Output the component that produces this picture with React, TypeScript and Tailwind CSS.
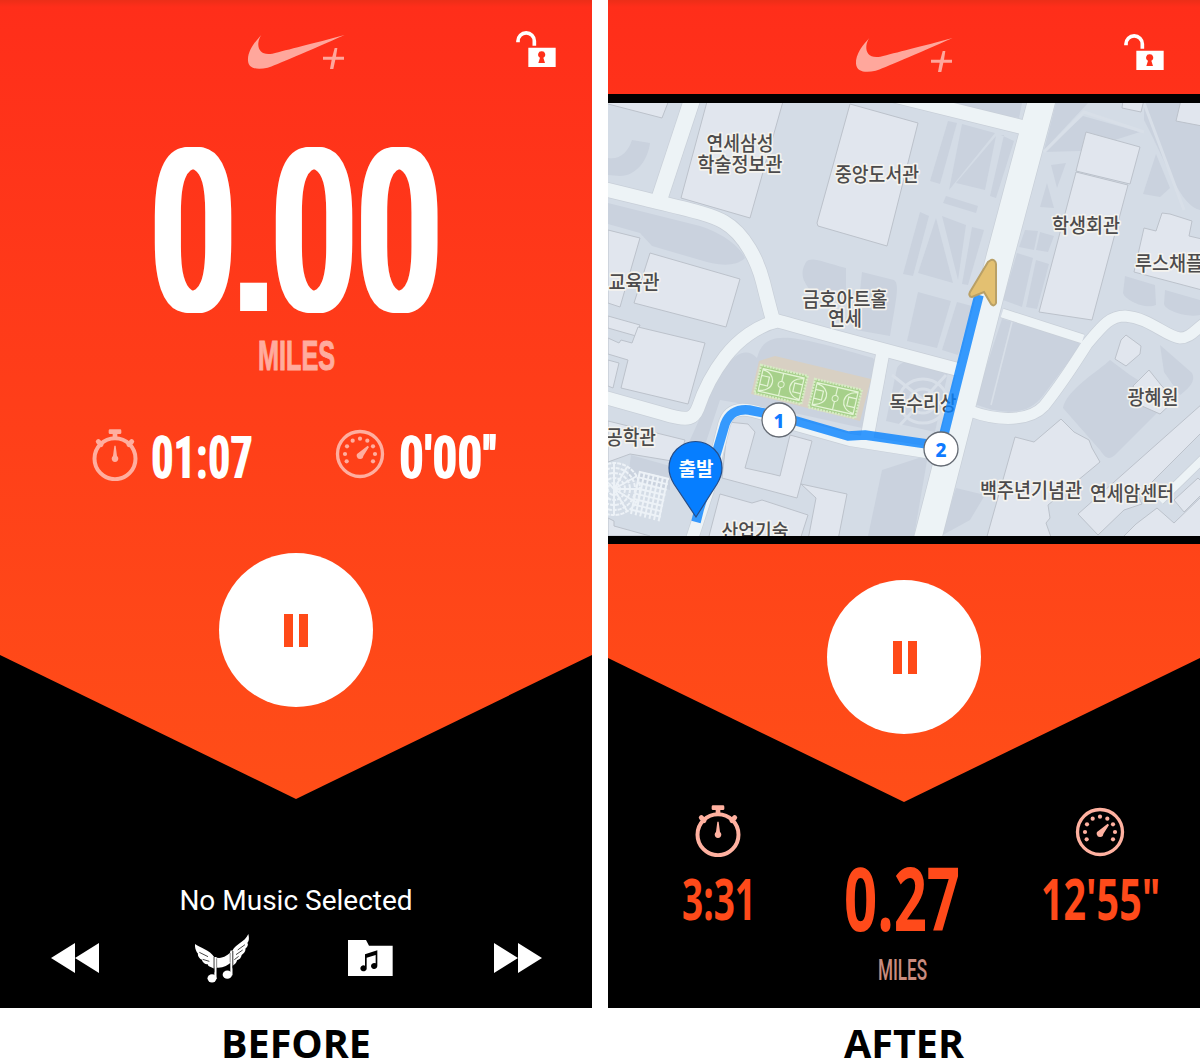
import { useLayoutEffect, useRef, type ReactNode } from "react";

/** Text squeezed horizontally so that it spans exactly `width` pixels. */
function Condensed({ children, width, className }: { children: string; width: number; className: string }) {
  const ref = useRef<HTMLSpanElement>(null);
  useLayoutEffect(() => {
    const el = ref.current;
    if (el) el.style.transform = `scaleX(${width / el.offsetWidth})`;
  }, [width, children]);
  return (
    <span className="block" style={{ width }}>
      <span ref={ref} className={`inline-block origin-left whitespace-nowrap ${className}`}>
        {children}
      </span>
    </span>
  );
}

// Sideways shadows thicken the vertical strokes only, as a condensed display face has them.
const hugeDigits =
  "font-['Roboto'] text-[227px] leading-[200px] font-medium tracking-[5px] [text-shadow:-7px_0_#fff,-4.5px_0_#fff,-2px_0_#fff,2px_0_#fff,4.5px_0_#fff,7px_0_#fff]";
const statDigits =
  "font-['Roboto'] text-[60px] leading-[57px] font-bold tracking-[3px] text-white [text-shadow:-1.6px_0_#fff,1.6px_0_#fff]";

function Header({ className }: { className: string }) {
  return (
    <header className={`relative flex justify-between pl-[247px] pr-[36px] ${className}`}>
      <svg className="h-[36px] w-[98px]" viewBox="50 42 294 108" fill="#ffa79c">
        <path d="M93 45C74 65 51 94 53 122C55 147 82 150 112 143C132 138 240 90 343 45C250 70 170 90 126 101C96 107 82 91 84 69C85 59 89 51 93 45Z" />
        <path d="M313 84H321L317 110H341V119H315L309 147H299L304 119H278V110H306Z" />
      </svg>
      <svg className="-mt-[3px] h-[36px] w-[41px]" viewBox="855 32 123 108">
        <path d="M864 66V62A24.5 24.5 0 0 1 913 62V76" fill="none" stroke="#fff" strokeWidth="11" />
        <path
          fill="#fff"
          fillRule="evenodd"
          d="M895 82H977V140H895ZM935 93A10 10 0 0 0 930 112L925 128H945L940 112A10 10 0 0 0 935 93Z"
        />
      </svg>
    </header>
  );
}

function Stopwatch({ className }: { className: string }) {
  return (
    <svg className={`h-[52px] w-[46px] ${className}`} viewBox="35 43 138 156" fill="currentColor">
      <circle cx="104" cy="132" r="61.5" fill="none" stroke="currentColor" strokeWidth="12" />
      <rect x="85" y="44" width="38" height="14" rx="4" />
      <rect x="97" y="56" width="14" height="14" />
      <path d="M54 81L62 90M154 81L146 90" stroke="currentColor" strokeWidth="15" strokeLinecap="round" />
      <path d="M102 93H106L110 124A10 10 0 1 1 98 124Z" />
    </svg>
  );
}

const gaugeDots = [
  [800, 143], [795, 121], [801, 98], [818, 81], [840, 75], [862, 81], [879, 98], [885, 121], [879, 143],
];

function Gauge({ className }: { className: string }) {
  return (
    <svg className={`h-[50px] w-[50px] ${className}`} viewBox="765 46 150 150" fill="currentColor">
      <circle cx="840" cy="121" r="67.5" fill="none" stroke="currentColor" strokeWidth="10" />
      {gaugeDots.map(([x, y]) => (
        <circle key={`${x}-${y}`} cx={x} cy={y} r="6.3" />
      ))}
      <path d="M863 96L867 100L850 127A10 10 0 1 1 836 117Z" />
    </svg>
  );
}

function PauseButton({ className }: { className: string }) {
  return (
    <button aria-label="Pause" className={`relative flex size-[154px] items-center justify-center gap-[6px] rounded-full bg-white ${className}`}>
      <span className="h-[33px] w-[9px] bg-[#ff4a18]" />
      <span className="h-[33px] w-[9px] bg-[#ff4a18]" />
    </button>
  );
}

function WingedNotes() {
  return (
    <svg className="h-[49px] w-[54px]" viewBox="15 25 162 147" fill="#fff">
      <path d="M15 55C28 66 60 72 73 95V129L62 124C56 122 52 119 54 116C44 116 36 108 36 102C28 100 22 90 24 84C17 76 14 64 15 55Z" />
      <path d="M127 75C138 54 164 50 175 25C178 38 177 46 172 52C176 56 172 64 166 69C168 76 162 84 155 88C154 96 148 102 141 104C140 112 134 117 127 121Z" />
      <path d="M73 94C92 102 112 93 126 74V106C112 123 94 129 73 125Z" />
      <rect x="73" y="94" width="6.5" height="66" />
      <rect x="121" y="75" width="6.5" height="74" />
      <ellipse cx="66" cy="158" rx="13.5" ry="12.5" />
      <ellipse cx="112" cy="147" rx="14" ry="12.5" />
      <path
        d="M28 80L54 93M38 101L58 107M165 57L143 73M158 73L138 87M146 92L133 102M72 94V140M128.5 76V128"
        fill="none"
        stroke="#000"
        strokeWidth="2.2"
      />
      <path d="M80 98V125M120.5 82V110" fill="none" stroke="#000" strokeWidth="1.4" />
    </svg>
  );
}

function MusicFolder() {
  return (
    <svg className="h-[36px] w-[45px]" viewBox="474 43 135 108">
      <path fill="#fff" d="M474 43H528L537 60H608V151H474Z" />
      <path d="M525 86L562 74V121A9.5 9 0 1 1 557 113V88L530 96V129A9.5 9 0 1 1 525 120Z" />
    </svg>
  );
}

function Skip({ className = "" }: { className?: string }) {
  return (
    <svg className={`h-[30px] w-[48px] ${className}`} viewBox="0 0 48 30" fill="#fff">
      <path d="M0 0L24 15V0L48 15L24 30V15L0 30Z" />
    </svg>
  );
}

const shade = [
  "M608 158C620 160 628 152 632 140L650 143C648 160 636 176 620 176L608 175Z",
  "M608 203L700 226C720 232 740 246 745 258C735 268 715 265 700 260L652 246L640 233L608 224Z",
  "M806 262C812 256 822 262 846 268L846 290H810C802 280 800 272 806 262Z",
  "M862 272L894 280C900 284 896 300 890 336L856 330Z",
  "M757 358C765 328 790 334 873 358C878 365 870 390 862 428L790 412L720 400L700 460L690 440L708 400C720 370 740 340 757 358Z",
  "M930 103H1022L1019 118Z",
  "M948 121L957 123L940 184L930 181Z",
  "M962 124L995 133L949 190Z",
  "M1001 135L1014 141L996 198L990 196L1004 135Z",
  "M996 136L985 190L956 183Z",
  "M946 196L978 206L976 213L943 203Z",
  "M920 212L929 216L913 276L903 274Z",
  "M936 218L953 283L918 273Z",
  "M942 216L966 225L958 280Z",
  "M972 227L984 230L968 285L962 284Z",
  "M918 292L951 301L937 348L907 341Z",
  "M957 302L972 306L958 355L942 350Z",
  "M1056 103H1088L1044 150Z",
  "M1083 116L1140 132L1080 151L1044 152Z",
  "M1144 103L1200 103V210C1180 205 1170 170 1144 120Z",
  "M1156 154L1170 188L1160 197L1143 194Z",
  "M1051 165L1066 163L1057 188Z",
  "M1047 183L1054 208L1040 207Z",
  "M1025 230L1038 231L1034 250L1019 247Z",
  "M1040 232L1054 236L1048 252L1036 250Z",
  "M1017 253L1033 258L1022 307L1003 300Z",
  "M1036 260L1049 264L1037 309L1026 307Z",
  "M1125 276L1155 285L1156 305C1145 310 1125 300 1123 293Z",
  "M1165 290L1200 300V315C1185 318 1165 310 1164 304Z",
  "M1002 319L1075 339C1080 342 1080 345 1078 349L1042 397C1030 412 1010 417 977 405L976 398Z",
  "M1063 408C1066 390 1100 370 1110 360L1130 375L1170 400L1115 455C1108 461 1105 457 1100 450Z",
  "M1160 345L1192 373C1196 380 1190 388 1180 395L1164 372Z",
  "M941 536L956 488L985 495L970 520Z",
  "M882 470L928 455L914 536H868Z",
  "M897 368C905 355 930 360 948 372L935 432L886 421Z",
  "M631 455L670 466V490L628 478Z",
];

const buildings = [
  "M600 100H669L662 118L608 104Z",
  "M708 98H784L750 218L681 198Z",
  "M850 104L918 123L887 246L818 226L817 223Z",
  "M608 230L640 238L620 307L608 303Z",
  "M650 253L740 279L726 327L634 303Z",
  "M608 316L640 325L636 336L608 328Z",
  "M608 338L619 343L621 340L632 343L638 327L705 343L688 404L621 388L628 360L608 354Z",
  "M608 360L619 363L613 388L608 386Z",
  "M608 421L685 440L678 462L630 454L608 462Z",
  "M728 422L748 424L755 432L745 468L772 474L780 476L790 435L812 441L797 498L722 478Z",
  "M720 494L752 503L762 500L808 515L800 540H708Z",
  "M801 484L847 494L838 540H808L816 498Z",
  "M608 518L614 521V526L650 536H608Z",
  "M1086 132L1140 147L1130 184L1076 171Z",
  "M1076 172L1128 185L1092 320L1039 312Z",
  "M1123 100H1144L1141 112L1122 108Z",
  "M1181 100H1202V126L1176 121Z",
  "M1144 228L1156 231L1162 213L1170 214L1192 221L1189 236L1202 239V290L1134 272Z",
  "M1121 340L1126 335L1141 346L1140 354L1126 366L1115 359Z",
  "M1149 370L1161 385L1175 400L1160 414L1142 406L1133 386Z",
  "M1015 437L1034 442L1061 419L1074 432L1089 440L1092 448L1100 462L1048 505L1050 518L1046 523L1052 540H986Z",
  "M1078 514L1202 404V432L1138 496L1142 504L1124 510L1098 535Z",
  "M1157 508L1174 523L1202 496V540H1120L1136 524Z",
  "M1174 500L1198 478L1202 482V494L1184 512Z",
];

const roads: [string, number][] = [
  ["M600 188L645 199C690 210 710 214 724 222C745 234 758 262 763 282C768 302 770 310 773 320", 14],
  ["M658 203L692 100", 16],
  ["M600 396L664 414C690 422 694 418 698 408C704 390 715 370 725 357C738 340 758 325 778 321C800 327 820 333 960 370", 13],
  ["M883 352L867 438", 13],
  ["M690 545L708 490L724 425C730 404 748 407 779 420L850 440L945 455", 12],
  ["M888 94L1030 129", 14],
  ["M1002 313L1083 339", 9],
  ["M970 411C1000 422 1030 421 1044 406C1060 386 1075 363 1087 344C1103 325 1110 316 1125 316C1150 318 1165 336 1180 338C1190 338 1195 330 1206 322", 11],
  ["M1044 92L1000 257L926 545", 27],
  ["M1160 501L1210 452", 8],
];

const labels: [string, number, number, number][] = [
  ["연세삼성", 740, 150.5, 67],
  ["학술정보관", 740, 171.5, 85],
  ["중앙도서관", 877, 181.5, 84],
  ["학생회관", 1086, 232.5, 68],
  ["루스채플", 1169, 270.5, 68],
  ["교육관", 634, 289.5, 51],
  ["금호아트홀", 845, 306.5, 85],
  ["연세", 845, 326, 34],
  ["독수리상", 923, 411, 67],
  ["광혜원", 1153, 404.5, 51],
  ["공학관", 631, 445, 50],
  ["백주년기념관", 1031, 497.5, 102],
  ["연세암센터", 1132, 500.5, 84],
  ["산업기술", 755, 539, 67],
];

function Court({ x, y }: { x: number; y: number }) {
  return (
    <g transform={`translate(${x} ${y}) rotate(13)`}>
      <rect width="48" height="29" fill="#a6d08a" stroke="#d6ecc4" strokeWidth="2.4" strokeDasharray="2 1" />
      <path
        d="M3 3H45V26H3ZM24 3V26M3 4C19 5 19 24 3 25M45 4C29 5 29 24 45 25M3 10H11V19H3M45 10H37V19H45"
        fill="none"
        stroke="#e4f4d6"
        strokeWidth="1.2"
      />
      <circle cx="24" cy="14.5" r="3" fill="#a6d08a" stroke="#e4f4d6" />
    </g>
  );
}

function WaypointMarker({ n, x, y }: { n: number; x: number; y: number }) {
  return (
    <g>
      <circle cx={x} cy={y} r="17" fill="#fff" stroke="#646a73" strokeWidth="1.3" />
      <text x={x} y={y + 8} textAnchor="middle" className="font-['Noto_Sans'] text-[19px] font-extrabold" fill="#0f7bff">
        {n}
      </text>
    </g>
  );
}

function RouteMap() {
  return (
    <svg className="block h-[433px] w-[592px]" viewBox="608 103 592 433">
      <rect x="608" y="103" width="592" height="433" fill="#d4dce6" />
      <g fill="#cad2de">
        {shade.map((d) => (
          <path key={d} d={d} />
        ))}
      </g>
      <g fill="none" stroke="#d8dfe8" strokeWidth="3">
        <ellipse cx="923" cy="401" rx="24" ry="22" />
        <ellipse cx="923" cy="401" rx="13" ry="12" />
        <path d="M892 375L955 425M900 425L946 375M1144 103L1184 210M1044 152L1084 112L1144 132" />
        <path d="M1012 322L991 405" strokeWidth="1.6" />
      </g>
      <g fill="none" stroke="#edf2f7" strokeWidth="2">
        {[6, 11, 16, 21, 26].map((r) => (
          <circle key={r} cx="614" cy="489" r={r} strokeDasharray="4 1" />
        ))}
        <path d="M614 489L596 470M614 489L614 463M614 489L627 467M614 489L637 476M614 489L640 489M614 489L637 503M614 489L627 511M614 489L614 515" />
        {[0, 1, 2, 3, 4, 5, 6].map((i) => (
          <path key={`c${i}`} d={`M${640 + i * 4.6} ${471 + i * 1.2}L${631 + i * 4.6} ${514 + i * 1.2}`} />
        ))}
        {[0, 1, 2, 3, 4, 5, 6, 7].map((i) => (
          <path key={`r${i}`} d={`M${640 - i * 1.2} ${472 + i * 5.4}L${669 - i * 1.2} ${479 + i * 5.4}`} />
        ))}
      </g>
      <g fill="#e1e6ee" stroke="#bcc2cb" strokeWidth="1">
        {buildings.map((d) => (
          <path key={d} d={d} />
        ))}
      </g>
      <g fill="none" strokeLinejoin="round">
        {roads.map(([d, w]) => (
          <path key={d} d={d} stroke="#c8cfd8" strokeWidth={w + 1.4} />
        ))}
        {roads.map(([d, w]) => (
          <path key={d} d={d} stroke="#edf3f6" strokeWidth={w} />
        ))}
      </g>
      <path d="M759 361L775 356L871 379L860 421L751 394Z" fill="#d8d0c3" />
      <Court x={761} y={365} />
      <Court x={815} y={379} />
      <g
        textAnchor="middle"
        className="font-['Noto_Sans_CJK_KR',sans-serif] text-[20px] font-medium"
        fill="#4c4b4c"
        stroke="#f4f3ee"
        strokeWidth="3.4"
        strokeLinejoin="round"
        paintOrder="stroke"
      >
        {labels.map(([name, x, y, w]) => (
          <text key={name} x={x} y={y} textLength={w} lengthAdjust="spacingAndGlyphs">
            {name}
          </text>
        ))}
      </g>
      <path
        d="M696 522L699 510L718 448L725 424C730 412 738 409 749 410L779 416L848 436L865 435L941 446L979 295"
        fill="none"
        stroke="#0682ff"
        strokeWidth="9.5"
        strokeLinejoin="round"
        strokeOpacity=".8"
      />
      <WaypointMarker n={1} x={779} y={420} />
      <WaypointMarker n={2} x={941} y={449} />
      <path d="M991 260C993 259 996 261 996 264L996 303C995 306 993 306 991 304L984 292L972 297C969 297 969 294 970 292L988 262Z" fill="#e3c071" stroke="#b9a066" strokeWidth="2" />
      <path d="M696 517L674 484C671 479 669 474 669 468A26.5 26.5 0 0 1 722 468C722 474 720 479 717 484Z" fill="#067eff" stroke="#274d86" strokeWidth="1.2" />
      <text x="696" y="476" textAnchor="middle" textLength="35" className="font-['Noto_Sans_CJK_KR',sans-serif] text-[19px] font-bold" fill="#fff">
        출발
      </text>
    </svg>
  );
}

function Phone({ caption, children }: { caption: string; children: ReactNode }) {
  return (
    <figure className="w-[592px]">
      <div className="relative flex h-[1008px] flex-col overflow-hidden bg-black">{children}</div>
      <figcaption className="flex h-[50px] justify-center font-['Open_Sans'] text-[39.5px] leading-[70px] font-bold text-black">
        {caption}
      </figcaption>
    </figure>
  );
}

export default function App() {
  return (
    <main className="flex h-[1058px] w-[1200px] gap-4 overflow-hidden bg-white">
      <Phone caption="BEFORE">
        <div className="absolute inset-x-0 top-0 h-[799px] bg-[linear-gradient(#ec2e18,#ff2e1a_7px,#ff4e18)] [clip-path:polygon(0_0,100%_0,100%_655px,50%_100%,0_655px)]" />
        <Header className="h-[94px] pt-[34px]" />
        <div className="relative flex h-[240px] items-baseline pt-[39px] pl-[151.5px] text-white">
          <Condensed width={85.3} className={hugeDigits}>
            0
          </Condensed>
          <span className="-mr-[7.5px] -ml-[9.5px] w-[53px] font-['Liberation_Sans'] text-[190px] leading-[200px] font-bold">.</span>
          <Condensed width={170.6} className={hugeDigits}>
            00
          </Condensed>
        </div>
        <div className="relative flex h-[74px] justify-center">
          <Condensed width={77} className="font-['Liberation_Sans'] text-[42px] leading-[44px] font-bold text-[#ffac9e] [-webkit-text-stroke:1px_#ffac9e]">
            MILES
          </Condensed>
        </div>
        <div className="relative flex h-[145px] pt-[21px] pl-[92px]">
          <Stopwatch className="text-[#ffae9f]" />
          <div className="ml-[14px] w-[184px]">
            <Condensed width={102} className={statDigits}>
              01:07
            </Condensed>
          </div>
          <Gauge className="mr-[15px] -ml-[1px] text-[#ffae9f]" />
          <Condensed width={98} className={statDigits}>
            {"0'00\""}
          </Condensed>
        </div>
        <PauseButton className="self-center" />
        <p className="mt-[178px] text-center font-['Roboto'] text-[28px] leading-[32px] text-white">
          No Music Selected
        </p>
        <div className="mt-[15px] flex h-[52px] items-center justify-between pr-[50px] pl-[51px]">
          <Skip className="rotate-180" />
          <div className="-ml-[5px]">
            <WingedNotes />
          </div>
          <div className="-ml-[3px]">
            <MusicFolder />
          </div>
          <Skip />
        </div>
      </Phone>
      <Phone caption="AFTER">
        <div className="absolute inset-x-0 top-0 h-[802px] bg-[linear-gradient(#ec2e18,#ff2e1a_7px,#ff4e18)] [clip-path:polygon(0_0,100%_0,100%_658px,50%_100%,0_658px)]" />
        <Header className="h-[94px] pt-[37px]" />
        <div className="relative border-t-[9px] border-b-[8px] border-black">
          <RouteMap />
        </div>
        <PauseButton className="mt-[36px] self-center pl-px" />
        <div className="mt-[71px] flex justify-between pr-[40px] pl-[72px]">
          <div className="flex w-[75px] flex-col items-center">
            <Stopwatch className="text-[#ffb1a0]" />
            <div className="mt-[12px] pl-[2px]">
              <Condensed width={74} className="font-['Open_Sans'] text-[58px] leading-[58px] font-bold text-[#ff4a1a]">
                3:31
              </Condensed>
            </div>
          </div>
          <div className="ml-[9px] flex flex-col items-center pt-[48px]">
            <Condensed width={116} className="font-['Open_Sans'] text-[88px] leading-[88px] font-bold text-[#ff4a1a]">
              0.27
            </Condensed>
            <div className="mt-[13px]">
              <Condensed width={49} className="font-['Roboto'] text-[29px] leading-[32px] font-medium text-[#c98b7e]">
                MILES
              </Condensed>
            </div>
          </div>
          <div className="flex w-[120px] flex-col items-center pt-[2px]">
            <Gauge className="text-[#ffb1a0]" />
            <div className="mt-[12px]">
              <Condensed width={119} className="font-['Open_Sans'] text-[58px] leading-[58px] font-bold text-[#ff4a1a]">
                {"12'55\""}
              </Condensed>
            </div>
          </div>
        </div>
      </Phone>
    </main>
  );
}
